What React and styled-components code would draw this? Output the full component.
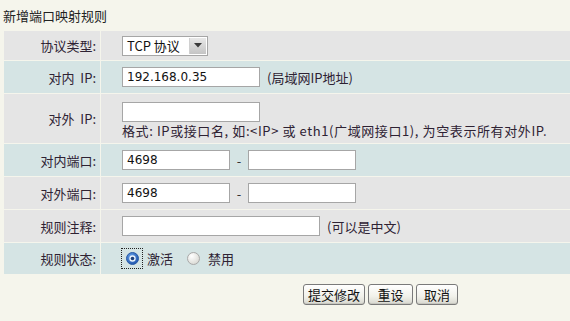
import { Fragment } from "react";
import styled, { createGlobalStyle } from "styled-components";

const GlobalStyle = createGlobalStyle`
  html, body {
    margin: 0;
    padding: 0;
    background: #f5f5ec;
  }
  body {
    font-family: "Noto Sans CJK SC", "DejaVu Sans", sans-serif;
    font-size: 13px;
    color: #2b2430;
  }
`;

const Page = styled.div`
  width: 570px;
  height: 321px;
  overflow: hidden;
  background: #f5f5ec;
`;

const Title = styled.div`
  height: 31px;
  padding-left: 3px;
  line-height: 31px;
  font-size: 13px;
  color: #222;
`;

const FormTable = styled.div`
  display: grid;
  grid-template-columns: 96px 1fr;
  column-gap: 1px;
  row-gap: 1px;
  margin-left: 4px;
`;

const Label = styled.div`
  display: flex;
  align-items: center;
  justify-content: flex-end;
  padding-right: 4px;
  height: ${({ $h }) => $h}px;
  background: ${({ $tone }) => ($tone === "blue" ? "#d5e4e4" : "#e5e5e5")};
  color: #2e2233;
  white-space: pre;
`;

const Value = styled.div`
  display: flex;
  flex-direction: ${({ $stack }) => ($stack ? "column" : "row")};
  align-items: ${({ $stack }) => ($stack ? "flex-start" : "center")};
  padding-left: 21px;
  padding-top: ${({ $stack }) => ($stack ? "8px" : "0")};
  box-sizing: border-box;
  height: ${({ $h }) => $h}px;
  background: ${({ $tone }) => ($tone === "blue" ? "#d5e4e4" : "#e5e5e5")};
  color: #2e2233;
`;

const TextInput = styled.div`
  box-sizing: border-box;
  width: ${({ $w }) => $w}px;
  height: 20px;
  border: 1px solid #a6a6a6;
  background: #fff;
  padding-left: 4px;
  font-family: "DejaVu Sans", Verdana, sans-serif;
  font-size: 12px;
  line-height: 18px;
  color: #111;
`;

const Note = styled.span`
  margin-left: 7px;
  color: #2e2233;
`;

const Help = styled.div`
  margin-top: 2px;
  line-height: 14px;
  letter-spacing: 0.6px;
  color: #2e2233;
  white-space: pre;
`;

const Dash = styled.span`
  width: 18px;
  text-align: center;
  color: #333;
`;

const Select = styled.div`
  box-sizing: border-box;
  display: flex;
  align-items: center;
  width: 86px;
  height: 20px;
  border: 1px solid #a6a6a6;
  background: #fff;
  padding: 1px;
`;

const SelectText = styled.span`
  flex: 1;
  padding-left: 3px;
  font-size: 13px;
  color: #111;
  white-space: pre;
`;

const SelectArrow = styled.div`
  display: flex;
  align-items: center;
  justify-content: center;
  width: 16px;
  height: 16px;
  background: linear-gradient(#e8e8e8, #c4c4c4);
  border-left: 1px solid #d0d0d0;
`;

const RadioGroup = styled.div`
  display: flex;
  align-items: center;
`;

const RadioFocus = styled.div`
  display: flex;
  align-items: center;
  justify-content: center;
  width: 22px;
  height: 21px;
  box-sizing: border-box;
  margin-left: -1px;
  border: ${({ $focus }) => ($focus ? "1px dotted #222" : "1px solid transparent")};
`;

const RadioText = styled.span`
  margin: 0 10px 0 4px;
`;

const Actions = styled.div`
  display: flex;
  gap: 3px;
  padding: 10px 0 0 303px;
`;

const Button = styled.button`
  box-sizing: border-box;
  width: ${({ $w }) => $w}px;
  height: 21px;
  padding: 0;
  border: 1px solid #7a7a7a;
  border-radius: 3px;
  background: linear-gradient(#ffffff, #f1f1ea 60%, #d8d8d0);
  box-shadow: inset 0 -1px 0 #c8c8c0;
  font-family: "Noto Sans CJK SC", sans-serif;
  font-size: 13px;
  line-height: 17px;
  color: #111;
`;

const Radio = ({ checked }) => (
  <svg width="13" height="13" viewBox="0 0 13 13">
    <defs>
      <radialGradient id="radioOff" cx="0.35" cy="0.3" r="0.8">
        <stop offset="0" stopColor="#ffffff" />
        <stop offset="1" stopColor="#d6d6d0" />
      </radialGradient>
      <radialGradient id="radioOn" cx="0.4" cy="0.35" r="0.7">
        <stop offset="0" stopColor="#6aa6ec" />
        <stop offset="1" stopColor="#1b4fa8" />
      </radialGradient>
    </defs>
    <circle
      cx="6.5"
      cy="6.5"
      r="6"
      fill={checked ? "url(#radioOn)" : "url(#radioOff)"}
      stroke={checked ? "#2a5ca8" : "#a8a8a8"}
      strokeWidth="1"
    />
    {checked && (
      <>
        <circle cx="6.5" cy="6.5" r="3.2" fill="#e9f1fb" />
        <circle cx="6.5" cy="6.5" r="1.8" fill="#1c3f7a" />
      </>
    )}
  </svg>
);

const rows = [
  { label: "协议类型:", tone: "gray", h: 29, kind: "select" },
  { label: "对内  IP:", tone: "blue", h: 32, kind: "ip" },
  { label: "对外  IP:", tone: "gray", h: 49, kind: "outer" },
  { label: "对内端口:", tone: "blue", h: 32, kind: "port" },
  { label: "对外端口:", tone: "gray", h: 32, kind: "port" },
  { label: "规则注释:", tone: "gray", h: 32, kind: "note" },
  { label: "规则状态:", tone: "blue", h: 31, kind: "state" },
];

function renderValue(kind) {
  switch (kind) {
    case "select":
      return (
        <Select>
          <SelectText>TCP 协议</SelectText>
          <SelectArrow>
            <svg width="8" height="5" viewBox="0 0 8 5">
              <path d="M0 0h8L4 4.5z" fill="#3a3a3a" />
            </svg>
          </SelectArrow>
        </Select>
      );
    case "ip":
      return (
        <>
          <TextInput $w={138}>192.168.0.35</TextInput>
          <Note>(局域网IP地址)</Note>
        </>
      );
    case "outer":
      return (
        <>
          <TextInput $w={138} />
          <Help>格式: IP或接口名, 如:&lt;IP&gt; 或 eth1(广域网接口1), 为空表示所有对外IP.</Help>
        </>
      );
    case "port":
      return (
        <>
          <TextInput $w={108}>4698</TextInput>
          <Dash>-</Dash>
          <TextInput $w={108} />
        </>
      );
    case "note":
      return (
        <>
          <TextInput $w={198} />
          <Note>(可以是中文)</Note>
        </>
      );
    case "state":
      return (
        <RadioGroup>
          <RadioFocus $focus>
            <Radio checked />
          </RadioFocus>
          <RadioText>激活</RadioText>
          <RadioFocus>
            <Radio />
          </RadioFocus>
          <RadioText>禁用</RadioText>
        </RadioGroup>
      );
    default:
      return null;
  }
}

export default function App() {
  return (
    <Page>
      <GlobalStyle />
      <Title>新增端口映射规则</Title>
      <FormTable>
        {rows.map((r) => (
          <Fragment key={r.label}>
            <Label $tone={r.tone} $h={r.h}>
              {r.label}
            </Label>
            <Value $tone={r.tone} $h={r.h} $stack={r.kind === "outer"}>
              {renderValue(r.kind)}
            </Value>
          </Fragment>
        ))}
      </FormTable>
      <Actions>
        <Button $w={62}>提交修改</Button>
        <Button $w={45}>重设</Button>
        <Button $w={42}>取消</Button>
      </Actions>
    </Page>
  );
}
